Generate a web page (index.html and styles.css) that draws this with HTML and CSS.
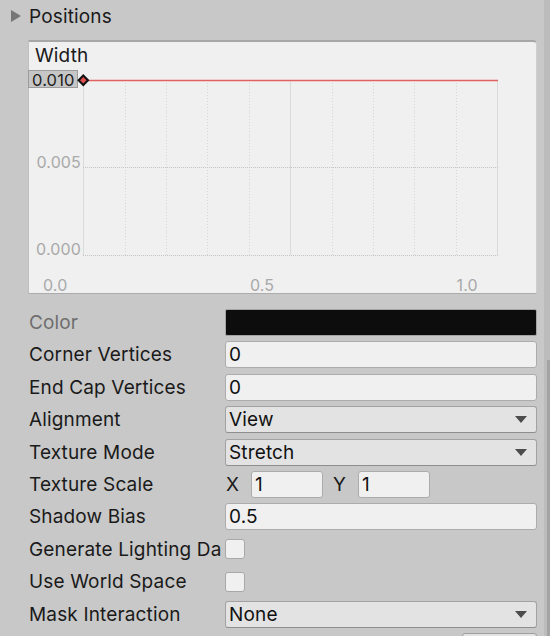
FILE: index.html
```html
<!DOCTYPE html>
<html>
<head>
<meta charset="utf-8">
<link rel="stylesheet" href="styles.css">
</head>
<body>
<div class="window">
  <div class="content">
    <div class="foldout">
      <svg class="fold-arrow" width="10" height="12" viewBox="0 0 10 12"><path d="M0 0 L10 6 L0 12 Z"/></svg>
      <span>Positions</span>
    </div>
    <div class="curve">
      <svg class="curve-svg" width="507" height="251" viewBox="0 0 507 251">
        <g class="minor">
          <line x1="96.5" y1="38" x2="96.5" y2="213"/>
          <line x1="137.5" y1="38" x2="137.5" y2="213"/>
          <line x1="178.5" y1="38" x2="178.5" y2="213"/>
          <line x1="220.5" y1="38" x2="220.5" y2="213"/>
          <line x1="303.5" y1="38" x2="303.5" y2="213"/>
          <line x1="344.5" y1="38" x2="344.5" y2="213"/>
          <line x1="385.5" y1="38" x2="385.5" y2="213"/>
          <line x1="427.5" y1="38" x2="427.5" y2="213"/>
        </g>
        <g class="major">
          <line x1="54.5" y1="38" x2="54.5" y2="213"/>
          <line x1="261.5" y1="38" x2="261.5" y2="213"/>
          <line x1="468.5" y1="38" x2="468.5" y2="213"/>
        </g>
        <g class="hline">
          <line x1="54" y1="125.5" x2="469" y2="125.5"/>
          <line x1="54" y1="213.5" x2="469" y2="213.5"/>
        </g>
        <text class="axis" x="52" y="126" text-anchor="end">0.005</text>
        <text class="axis" x="52" y="213" text-anchor="end">0.000</text>
        <text class="axis" x="14" y="249">0.0</text>
        <text class="axis" x="221" y="249">0.5</text>
        <text class="axis" x="427.5" y="249">1.0</text>
        <text class="title" x="6" y="20">Width</text>
        <rect class="valbox" x="-0.5" y="28.5" width="49" height="17"/>
        <text class="val" x="3" y="44">0.010</text>
        <line class="curve-line" x1="59" y1="38.5" x2="469" y2="38.5"/>
        <path class="key" d="M54.3 33.5 L59 38.3 L54.3 43 L49.6 38.3 Z"/>
      </svg>
    </div>
    <div class="props">
      <div class="row">
        <span class="label disabled">Color</span>
        <div class="color-field"></div>
      </div>
      <div class="row">
        <span class="label">Corner Vertices</span>
        <div class="field">0</div>
      </div>
      <div class="row">
        <span class="label">End Cap Vertices</span>
        <div class="field">0</div>
      </div>
      <div class="row">
        <span class="label">Alignment</span>
        <div class="field dropdown"><span>View</span><span class="caret"></span></div>
      </div>
      <div class="row">
        <span class="label">Texture Mode</span>
        <div class="field dropdown"><span>Stretch</span><span class="caret"></span></div>
      </div>
      <div class="row">
        <span class="label">Texture Scale</span>
        <div class="vec">
          <span class="axis-x">X</span>
          <div class="field small">1</div>
          <span class="axis-y">Y</span>
          <div class="field small">1</div>
        </div>
      </div>
      <div class="row">
        <span class="label">Shadow Bias</span>
        <div class="field">0.5</div>
      </div>
      <div class="row">
        <span class="label">Generate Lighting Data</span>
        <div class="checkbox"></div>
      </div>
      <div class="row">
        <span class="label">Use World Space</span>
        <div class="checkbox"></div>
      </div>
      <div class="row">
        <span class="label">Mask Interaction</span>
        <div class="field dropdown"><span>None</span><span class="caret"></span></div>
      </div>
      <div class="row end">
        <div class="button"></div>
      </div>
    </div>
  </div>
  <div class="scrollbar">
    <div class="track-top"></div>
    <div class="thumb"></div>
  </div>
</div>
</body>
</html>
```

FILE: styles.css
```css
html, body {
  margin: 0;
  padding: 0;
}
body {
  background: #c8c8c8;
  font-family: Inter, "Noto Sans", sans-serif;
  font-size: 19px;
  letter-spacing: 0.15px;
  color: #1a1a1a;
  overflow: hidden;
}
.window {
  display: flex;
  width: 550px;
  height: 636px;
  overflow: hidden;
}
.content {
  width: 544px;
  flex: none;
}
.foldout {
  height: 32px;
  margin-bottom: 8px;
  display: flex;
  align-items: center;
  padding-left: 11px;
  gap: 8px;
}
.fold-arrow {
  fill: #767676;
  flex: none;
}
.curve {
  margin-left: 28px;
  width: 509px;
  height: 254px;
  box-sizing: border-box;
  background: #f0f0f0;
  border: 1px solid #c0c0c0;
  border-top: 2px solid #a7a7a7;
  border-bottom-color: #acacac;
  border-right-color: #cfcfcf;
  border-radius: 0 4px 0 0;
}
.curve-svg {
  display: block;
  overflow: visible;
}
.minor line {
  stroke: #d6d6d6;
  stroke-width: 1;
  stroke-dasharray: 1 2;
}
.major line {
  stroke: #dadada;
  stroke-width: 1;
}
.hline line {
  stroke: #c4c4c4;
  stroke-width: 1;
  stroke-dasharray: 1 1;
}
.axis {
  font-family: Inter, "Noto Sans", sans-serif;
  font-size: 16px;
  fill: #a9a9a9;
}
.title {
  font-family: Inter, "Noto Sans", sans-serif;
  font-size: 19px;
  fill: #1a1a1a;
}
.valbox {
  fill: #c6c6c6;
  stroke: #9c9c9c;
  stroke-width: 1;
}
.val {
  font-family: Inter, "Noto Sans", sans-serif;
  font-size: 16.5px;
  fill: #1f1f1f;
}
.curve-line {
  stroke: #e26262;
  stroke-width: 1.4;
}
.key {
  fill: #e05050;
  stroke: #111;
  stroke-width: 2;
}
.props {
  margin-top: 15px;
  margin-left: 29px;
  width: 508px;
  display: flex;
  flex-direction: column;
  gap: 5.4px;
}
.row {
  display: flex;
  align-items: center;
  height: 27px;
}
.row.end {
  justify-content: flex-end;
}
.label {
  width: 192px;
  margin-right: 4px;
  flex: none;
  overflow: hidden;
  white-space: nowrap;
}
.label.disabled {
  color: #6e6e6e;
}
.field {
  flex: 1;
  height: 27px;
  box-sizing: border-box;
  border: 1px solid #acacac;
  border-radius: 3px;
  background: #f0f0f0;
  padding-left: 3px;
  display: flex;
  align-items: center;
  color: #111;
}
.dropdown {
  background: #e3e3e3;
  border-color: #a2a2a2;
  border-bottom-color: #8e8e8e;
  justify-content: space-between;
  padding-right: 9px;
}
.caret {
  width: 0;
  height: 0;
  border-left: 6px solid transparent;
  border-right: 6px solid transparent;
  border-top: 7px solid #4c4c4c;
}
.color-field {
  flex: 1;
  height: 27px;
  box-sizing: border-box;
  background: #0d0d0d;
  border: 1px solid #a4a4a4;
  border-radius: 2px;
}
.vec {
  display: flex;
  align-items: center;
}
.axis-x {
  width: 25px;
  padding-left: 1px;
}
.axis-y {
  width: 25px;
  margin-left: 10px;
}
.field.small {
  flex: none;
  width: 72px;
}
.checkbox {
  width: 20px;
  height: 20px;
  box-sizing: border-box;
  background: #f0f0f0;
  border: 1px solid #a8a8a8;
  border-radius: 3px;
}
.button {
  width: 75px;
  height: 27px;
  box-sizing: border-box;
  background: #e3e3e3;
  border: 1px solid #9e9e9e;
  border-radius: 3px;
}
.scrollbar {
  width: 6px;
  flex: none;
  background: #bcbcbc;
  display: flex;
  flex-direction: column;
}
.track-top {
  height: 360px;
  flex: none;
}
.thumb {
  flex: 1;
  margin-left: 3px;
  background: #a4a4a4;
}
```
